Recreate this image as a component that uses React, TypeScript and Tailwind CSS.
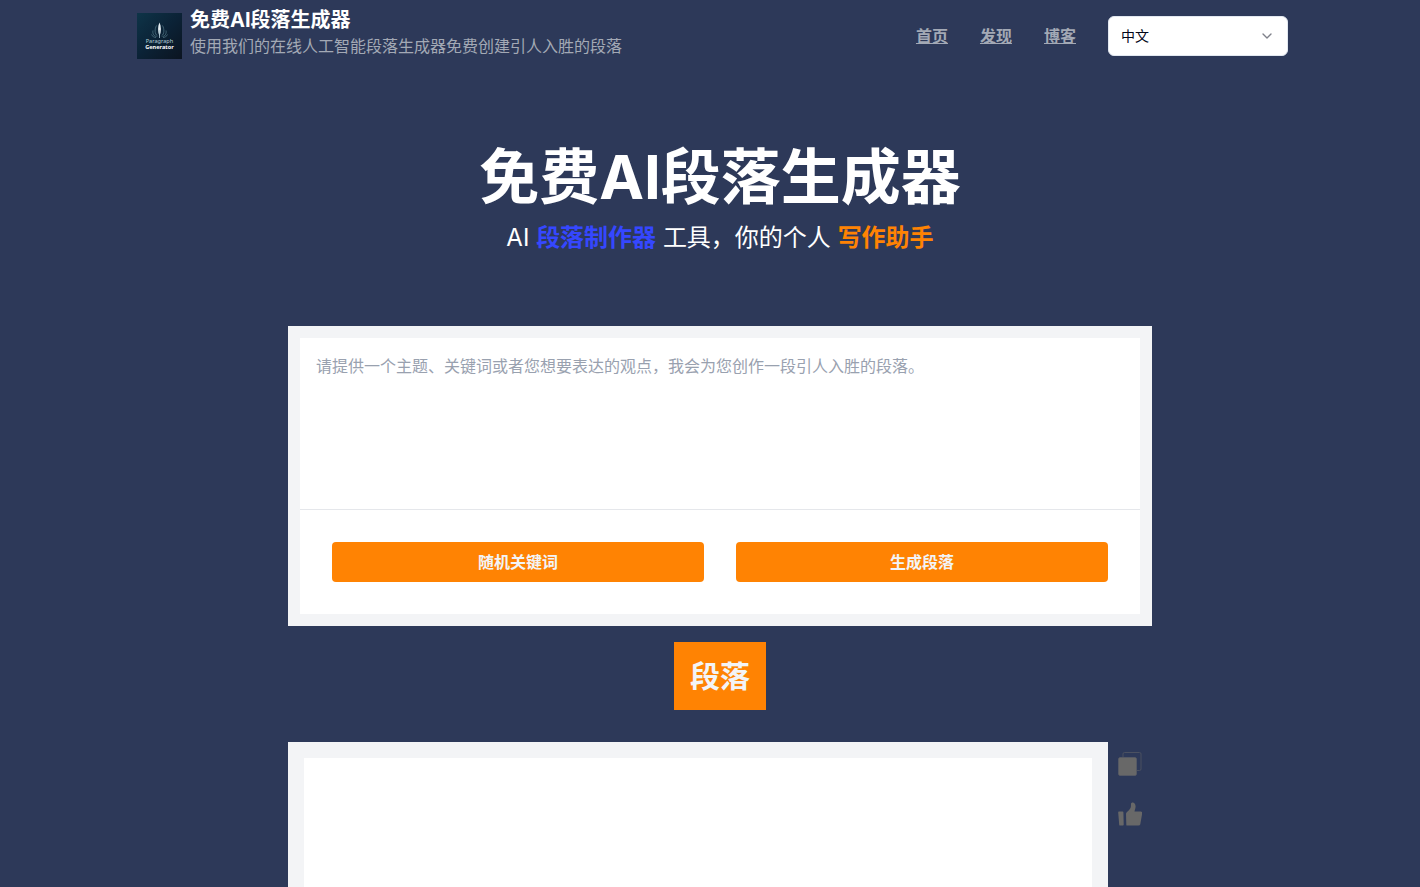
import React from "react";
import { ChevronDown } from "lucide-react";

const navLinks = ["首页", "发现", "博客"];

function Logo() {
  return (
    <svg viewBox="0 0 45 46" className="h-[46px] w-[45px] shrink-0" role="img" aria-label="Paragraph Generator">
      <defs>
        <linearGradient id="logo-bg" x1="0" y1="0" x2="1" y2="1">
          <stop offset="0" stopColor="#0e3448" />
          <stop offset="0.5" stopColor="#0b2236" />
          <stop offset="1" stopColor="#0b1420" />
        </linearGradient>
      </defs>
      <rect width="45" height="46" fill="url(#logo-bg)" />
      <g fill="none" stroke="#5f8796" strokeWidth="0.7" opacity="0.9">
        <path d="M20.500 23C17.500 21 17.500 16 19.500 12.500M24.500 23c3-2 3-7 1-10.500M19.500 23.500c-3.500-.5-4-4-3.500-6M25.500 23.500c3.500-.5 4-4 3.500-6M19 24.500c-2 0-4-1.500-4.500-3M26 24.500c2 0 4-1.500 4.500-3" />
      </g>
      <path d="M22.500 9.500C24.400 13 24.400 18.500 22.500 23.500 20.600 18.500 20.600 13 22.500 9.500Z" fill="#e4edf1" />
      <path d="M22.500 17v8" stroke="#a9c3d0" strokeWidth="0.8" />
      <text x="22.500" y="30" textAnchor="middle" fontSize="5.600" fill="#b4ccd8" fontFamily="Noto Sans, sans-serif">Paragraph</text>
      <text x="22.500" y="36" textAnchor="middle" fontSize="5.600" fontWeight="700" fill="#ffffff" fontFamily="Noto Sans, sans-serif">Generator</text>
    </svg>
  );
}

function CopyIcon() {
  return (
    <svg viewBox="0 0 24 24" className="size-6" aria-hidden="true">
      <path d="M5 5V2Q5 .5 6.500 .5H21.500Q23 .5 23 2V17Q23 18.500 21.500 18.500H19" fill="none" stroke="#4b5161" strokeWidth="1" />
      <rect x="0.500" y="5.500" width="18" height="18" rx="1.500" fill="#686868" stroke="#5c5f66" strokeWidth="0.600" />
    </svg>
  );
}

function LikeIcon() {
  return (
    <svg viewBox="0 0 24 24" className="size-6" fill="#686868" aria-hidden="true">
      <path d="M.9 9.500H4.600Q5.400 9.500 5.400 10.300L5.700 22.800Q5.700 23.600 5 23.600H2.200Q1.300 23.600 1.200 22.700L.2 10.500Q.1 9.500 .9 9.500Z" />
      <path d="M8 11.800C8.200 9.800 12.600 8 12.900 4.600L13 2C13 -.2 17.600-.3 17.600 4.600 17.600 6.500 16.800 8 16.500 9.500H22.800Q24.500 9.500 24.200 11.300L22.300 22.200Q22 23.600 20.500 23.600H9.200Q8.300 23.600 8.300 22.700Z" />
    </svg>
  );
}

export default function App() {
  return (
    <div className="flex min-h-screen flex-col bg-[#2d3959] pl-5 font-['Inter','Noto_Sans_CJK_SC',sans-serif]">
      <header className="mx-auto flex h-18 w-full max-w-[1166px] items-center justify-between pr-[15px]">
        <div className="flex items-center gap-2">
          <Logo />
          <div className="pb-1">
            <p className="text-xl leading-6 font-bold text-white">免费AI段落生成器</p>
            <p className="text-base leading-7 text-[#a3a9b5]">使用我们的在线人工智能段落生成器免费创建引人入胜的段落</p>
          </div>
        </div>
        <nav className="flex items-center gap-8">
          {navLinks.map((label) => (
            <a key={label} href="#" className="text-base font-bold text-[#a3a9b5] underline">
              {label}
            </a>
          ))}
          <div className="relative w-[180px]">
            <select
              aria-label="语言"
              className="h-10 w-full appearance-none rounded-md border border-slate-200 bg-white px-3 text-sm text-slate-950"
            >
              <option>中文</option>
            </select>
            <ChevronDown className="pointer-events-none absolute top-3 right-[13px] size-4 text-slate-950 opacity-50" />
          </div>
        </nav>
      </header>

      <main className="mx-auto flex w-full max-w-[864px] grow flex-col pt-18 text-center">
        <h1 className="text-6xl leading-[66px] font-bold text-white">免费AI段落生成器</h1>
        <h2 className="pt-[10px] text-2xl leading-9 text-white">
          AI <span className="font-bold text-[#3547ff]">段落制作器</span> 工具，你的个人{" "}
          <span className="font-bold text-[#ff8303]">写作助手</span>
        </h2>

        <form className="mt-[70px] bg-gray-100 p-3" onSubmit={(e) => e.preventDefault()}>
          <div className="bg-white">
            <textarea
              aria-label="主题"
              placeholder="请提供一个主题、关键词或者您想要表达的观点，我会为您创作一段引人入胜的段落。"
              className="block h-[172px] w-full resize-none border-b border-gray-200 p-4 text-base text-gray-900 outline-none placeholder:text-gray-400"
            />
            <div className="grid grid-cols-2 gap-8 p-8">
              <button type="button" className="h-10 rounded bg-[#ff8303] font-bold text-gray-100">
                随机关键词
              </button>
              <button type="submit" className="h-10 rounded bg-[#ff8303] font-bold text-gray-100">
                生成段落
              </button>
            </div>
          </div>
        </form>

        <h3 className="mx-auto mt-4 bg-[#ff8303] p-4 text-3xl leading-9 font-bold text-gray-100">段落</h3>

        <section className="mt-8 flex grow">
          <div className="flex grow flex-col bg-gray-100 px-4 pt-4">
            <output aria-label="段落" className="block grow bg-white" />
          </div>
          <div className="flex w-11 flex-col items-center gap-[26px] pt-[10px]">
            <button type="button" aria-label="复制">
              <CopyIcon />
            </button>
            <button type="button" aria-label="点赞">
              <LikeIcon />
            </button>
          </div>
        </section>
      </main>
    </div>
  );
}
